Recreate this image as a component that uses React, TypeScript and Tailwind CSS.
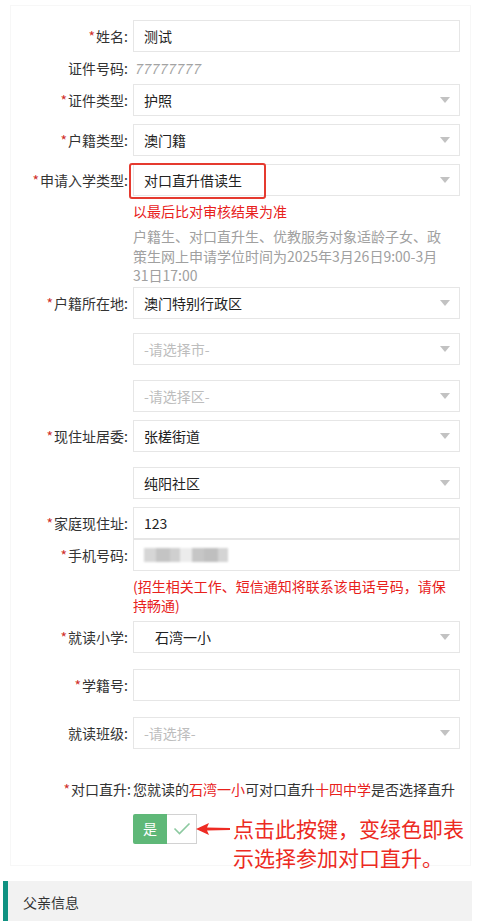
import React from "react";

const FONT = { fontFamily: '"Noto Sans CJK SC", "Noto Sans", sans-serif' };

function Label({ text, req }: { text: string; req?: boolean }) {
  return (
    <div className="w-[117px] shrink-0 text-right text-[14px] leading-[20px] text-[#333] whitespace-nowrap">
      {req && <span className="text-[#d0302b] mr-[1px]">*</span>}
      {text}:
    </div>
  );
}

function Tri() {
  return (
    <span className="mr-[9px] w-0 h-0 border-x-[5px] border-x-transparent border-t-[6px] border-t-[#c2c2c2] shrink-0" />
  );
}

function Box({
  value,
  placeholder,
  select,
  indent,
  children,
}: {
  value?: string;
  placeholder?: string;
  select?: boolean;
  indent?: boolean;
  children?: React.ReactNode;
}) {
  return (
    <div className="w-[327px] h-[32px] border border-[#e6e6e6] bg-white flex items-center">
      <div className={`flex-1 text-[14px] leading-[20px] ${indent ? "pl-[21px]" : "pl-[10px]"} ${value ? "text-[#222]" : "text-[#bdbdbd]"}`}>
        {children ?? (value || placeholder)}
      </div>
      {select && <Tri />}
    </div>
  );
}

function Row({
  label,
  req,
  children,
  className = "",
}: {
  label?: string;
  req?: boolean;
  children: React.ReactNode;
  className?: string;
}) {
  return (
    <div className={`flex items-center ${className}`}>
      {label ? <Label text={label} req={req} /> : <div className="w-[117px] shrink-0" />}
      <div className="ml-[5px]">{children}</div>
    </div>
  );
}

export default function App() {
  return (
    <div className="w-[482px] min-h-[921px] bg-white overflow-hidden" style={FONT}>
      <div className="ml-[10px] mt-[5px] w-[461px] border border-[#f7f7f7] pt-[14px] h-[861px]">
        <Row label="姓名" req>
          <Box value="测试" />
        </Row>
        <Row label="证件号码" className="h-[32px]">
          <div className="pl-[1px] text-[14px] italic text-[#a3a3a3] tracking-[0.5px]">77777777</div>
        </Row>
        <Row label="证件类型" req>
          <Box value="护照" select />
        </Row>
        <Row label="户籍类型" req className="mt-[8px]">
          <Box value="澳门籍" select />
        </Row>
        <Row label="申请入学类型" req className="mt-[8px]">
          <div className="relative">
            <Box value="对口直升借读生" select />
            <div className="absolute left-[-4px] top-[-1px] w-[137px] h-[36px] border-[2px] border-[#e53a2f] rounded-[3px]" />
          </div>
        </Row>
        <Row className="mt-[5px]">
          <div className="text-[14px] leading-[20px] text-[#e8211c]">以最后比对审核结果为准</div>
        </Row>
        <Row className="mt-[6px]">
          <div className="text-[14px] leading-[19.5px] text-[#a0a0a0] whitespace-nowrap">
            户籍生、对口直升生、优教服务对象适龄子女、政
            <br />
            策生网上申请学位时间为2025年3月26日9:00-3月
            <br />
            31日17:00
          </div>
        </Row>
        <Row label="户籍所在地" req className="mt-[1px]">
          <Box value="澳门特别行政区" select />
        </Row>
        <Row className="mt-[14px]">
          <Box placeholder="-请选择市-" select />
        </Row>
        <Row className="mt-[15px]">
          <Box placeholder="-请选择区-" select />
        </Row>
        <Row label="现住址居委" req className="mt-[8px]">
          <Box value="张槎街道" select />
        </Row>
        <Row className="mt-[15px]">
          <Box value="纯阳社区" select />
        </Row>
        <Row label="家庭现住址" req className="mt-[8px]">
          <Box value="123" />
        </Row>
        <Row label="手机号码" req className="mt-[0px]">
          <Box value="x">
            <div className="flex items-center h-[18px] blur-[1.2px]">
              <div className="w-[12px] h-[14px] bg-[#d6d6d6]" />
              <div className="w-[14px] h-[14px] bg-[#c4c4c4]" />
              <div className="w-[10px] h-[14px] bg-[#cfcfcf]" />
              <div className="w-[12px] h-[14px] bg-[#ececec]" />
              <div className="w-[12px] h-[14px] bg-[#c6c6c6]" />
              <div className="w-[14px] h-[14px] bg-[#bfbfbf]" />
              <div className="w-[10px] h-[14px] bg-[#d4d4d4]" />
            </div>
          </Box>
        </Row>
        <Row className="mt-[6px]">
          <div className="text-[14px] leading-[19px] text-[#e8211c] whitespace-nowrap">
            (招生相关工作、短信通知将联系该电话号码，请保
            <br />
            持畅通)
          </div>
        </Row>
        <Row label="就读小学" req className="mt-[6px]">
          <Box value="石湾一小" select indent />
        </Row>
        <Row label="学籍号" req className="mt-[16px]">
          <Box value="" />
        </Row>
        <Row label="就读班级" className="mt-[16px]">
          <Box placeholder="-请选择-" select />
        </Row>
        <div className="flex items-center mt-[30px]">
          <div className="w-[120px] shrink-0 text-right text-[14px] leading-[20px] text-[#333] whitespace-nowrap">
            <span className="text-[#d0302b] mr-[1px]">*</span>对口直升:
          </div>
          <div className="ml-[2px] text-[14px] leading-[20px] text-[#333] whitespace-nowrap">
            您就读的<span className="text-[#e8211c]">石湾一小</span>可对口直升
            <span className="text-[#e8211c]">十四中学</span>是否选择直升
          </div>
        </div>
        <Row className="mt-[15px] items-start">
          <div className="flex items-start">
            <div className="flex h-[30px]">
              <div className="w-[34px] h-[30px] bg-[#5fb878] rounded-l-[2px] flex items-center justify-center text-white text-[14px]">
                是
              </div>
              <div className="w-[30px] h-[30px] border border-l-0 border-[#d2d2d2] bg-white flex items-center justify-center">
                <svg width="18" height="14" viewBox="0 0 18 14">
                  <polyline points="1.5,6.5 6.5,11.5 16.5,1.5" fill="none" stroke="#8cc9a0" strokeWidth="1.6" />
                </svg>
              </div>
            </div>
            <svg className="mt-[8px] -ml-[1px]" width="34" height="14" viewBox="0 0 34 14">
              <polygon points="0,7 13,1 11,5.5 34,6 34,8 11,8.5 13,13" fill="#ee2b23" />
            </svg>
            <div className="ml-[3px] text-[21px] leading-[29px] text-[#ec2a22] whitespace-nowrap h-[52px]">
              点击此按键，变绿色即表
              <br />
              示选择参加对口直升。
            </div>
          </div>
        </Row>
      </div>
      <div className="ml-[3px] mt-[15px] w-[469px] h-[60px] bg-[#f2f2f2] border-l-[5px] border-[#0f9181] pl-[15px] pt-[10px]">
        <div className="text-[14px] leading-[22px] text-[#333]">父亲信息</div>
      </div>
    </div>
  );
}
